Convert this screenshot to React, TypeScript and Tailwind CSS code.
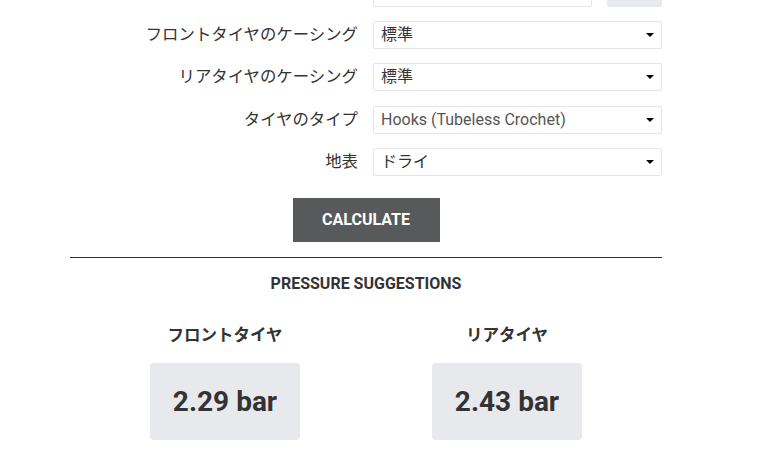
import { ReactNode } from "react"

const font = { fontFamily: "Roboto, 'Noto Sans CJK JP', sans-serif" }

const rows = [
  { label: "フロントタイヤのケーシング", value: "標準" },
  { label: "リアタイヤのケーシング", value: "標準" },
  { label: "タイヤのタイプ", value: "Hooks (Tubeless Crochet)", muted: true },
  { label: "地表", value: "ドライ" },
]

const results = [
  { label: "フロントタイヤ", value: "2.29 bar" },
  { label: "リアタイヤ", value: "2.43 bar" },
]

function Row({ label, children }: { label: string; children: ReactNode }) {
  return (
    <div className="flex items-center gap-[15px]">
      <div className="w-[288px] text-right text-[16.4px] text-[#333]">{label}</div>
      {children}
    </div>
  )
}

function Select({ value, muted }: { value: string; muted?: boolean }) {
  return (
    <div className="flex h-[28px] w-[289px] items-center justify-between rounded-[2px] border border-[#e6e6e6] bg-white pl-[7px] pr-[7px]">
      <span className={`text-[16px] ${muted ? "text-[#555]" : "text-[#333]"}`}>{value}</span>
      <span className="h-0 w-0 border-x-[4px] border-t-[4px] border-x-transparent border-t-black" />
    </div>
  )
}

export default function App() {
  return (
    <div className="min-h-[468px] bg-white" style={font}>
      <div className="ml-[70px] w-[592px] -mt-[21px]">
        {/* Form */}
        <div className="flex flex-col gap-[14px]">
          <Row label="">
            <div className="flex gap-[15px]">
              <div className="h-[28px] w-[219px] rounded-[2px] border border-[#e6e6e6]" />
              <div className="h-[28px] w-[55px] rounded-[2px] bg-[#e8e9ec]" />
            </div>
          </Row>
          {rows.map((row, i) => (
            <div key={i} className={i === 2 ? "mt-[1px]" : ""}>
              <Row label={row.label}>
                <Select value={row.value} muted={row.muted} />
              </Row>
            </div>
          ))}
        </div>

        <div className="mt-[22px] flex justify-center">
          <button className="h-[44px] w-[147px] bg-[#58595b] text-[16px] font-bold text-white">
            CALCULATE
          </button>
        </div>

        <div className="mt-[15px] border-t border-[#333]" />

        {/* Results */}
        <div className="mt-[14px] text-center text-[16px] leading-[24px] font-bold text-[#333]">
          PRESSURE SUGGESTIONS
        </div>

        <div className="mx-auto mt-[28px] grid w-[564px] grid-cols-2">
          {results.map((r) => (
            <div key={r.label} className="flex flex-col items-center">
              <div className="text-[16.5px] leading-[24px] font-bold text-[#333]">{r.label}</div>
              <div className="mt-[15px] flex h-[77px] w-[150px] items-center justify-center rounded-[4px] bg-[#e8e9ec]">
                <span className="text-[28px] font-bold text-[#333]">{r.value}</span>
              </div>
            </div>
          ))}
        </div>
      </div>
    </div>
  )
}
